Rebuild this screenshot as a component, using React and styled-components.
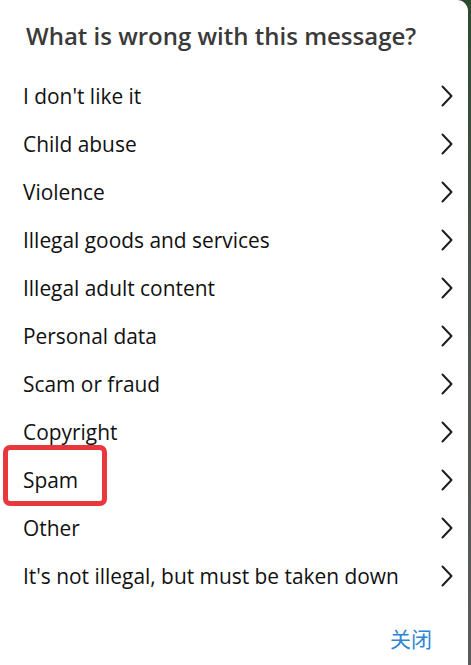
import React from 'react'
import styled, { createGlobalStyle } from 'styled-components'

const items = [
  "I don't like it",
  'Child abuse',
  'Violence',
  'Illegal goods and services',
  'Illegal adult content',
  'Personal data',
  'Scam or fraud',
  'Copyright',
  'Spam',
  'Other',
  "It's not illegal, but must be taken down",
]

const Chevron = () => (
  <svg width="14" height="22" viewBox="0 0 14 22" fill="none">
    <path d="M2.5 1.5 L11.5 11 L2.5 20.5" stroke="#1e1e1e" strokeWidth="2" strokeLinecap="round" strokeLinejoin="round" />
  </svg>
)

const App = () => {
  return (
    <>
      <Global />
      <Page>
        <Panel>
          <Title>What is wrong with this message?</Title>
          <List>
            {items.map((label) => (
              <Row key={label}>
                <Label>{label}</Label>
                <Chevron />
                {label === 'Spam' && <Highlight />}
              </Row>
            ))}
          </List>
          <Footer>
            <CloseButton>关闭</CloseButton>
          </Footer>
        </Panel>
      </Page>
    </>
  )
}

export default App

const Global = createGlobalStyle`
  * { box-sizing: border-box; }
  html, body {
    margin: 0;
    padding: 0;
  }
  body {
    font-family: "Open Sans", "Noto Sans", sans-serif;
    background: linear-gradient(180deg, #2c4a2f 0%, #4a524b 40%, #5b5b5b 100%);
  }
`;

const Page = styled.div`
  width: 471px;
  height: 665px;
  padding-right: 3px;
  display: flex;
`;

const Panel = styled.div`
  flex: 1;
  background: #fff;
  border-top-right-radius: 11px;
  display: flex;
  flex-direction: column;
`;

const Title = styled.h1`
  margin: 0;
  height: 72px;
  padding: 0 0 2px 26px;
  display: flex;
  align-items: center;
  font-size: 24px;
  font-weight: 600;
  color: #3a3a3a;
`;

const List = styled.div`
  display: flex;
  flex-direction: column;
`;

const Row = styled.div`
  position: relative;
  height: 48px;
  display: flex;
  align-items: center;
  justify-content: space-between;
  padding: 0 14px 0 23px;
`;

const Label = styled.span`
  font-size: 20.9px;
  color: #111;
`;

const Highlight = styled.div`
  position: absolute;
  left: 3px;
  top: -11px;
  width: 104px;
  height: 61px;
  border: 5px solid #e8383d;
  border-radius: 7px;
`;

const Footer = styled.div`
  flex: 1;
  display: flex;
  justify-content: flex-end;
  align-items: center;
  padding: 10px 36px 0 0;
`;

const CloseButton = styled.button`
  border: none;
  background: none;
  padding: 0;
  font-family: "Noto Sans CJK SC", sans-serif;
  font-size: 21px;
  color: #2d86d4;
  cursor: pointer;
`;
